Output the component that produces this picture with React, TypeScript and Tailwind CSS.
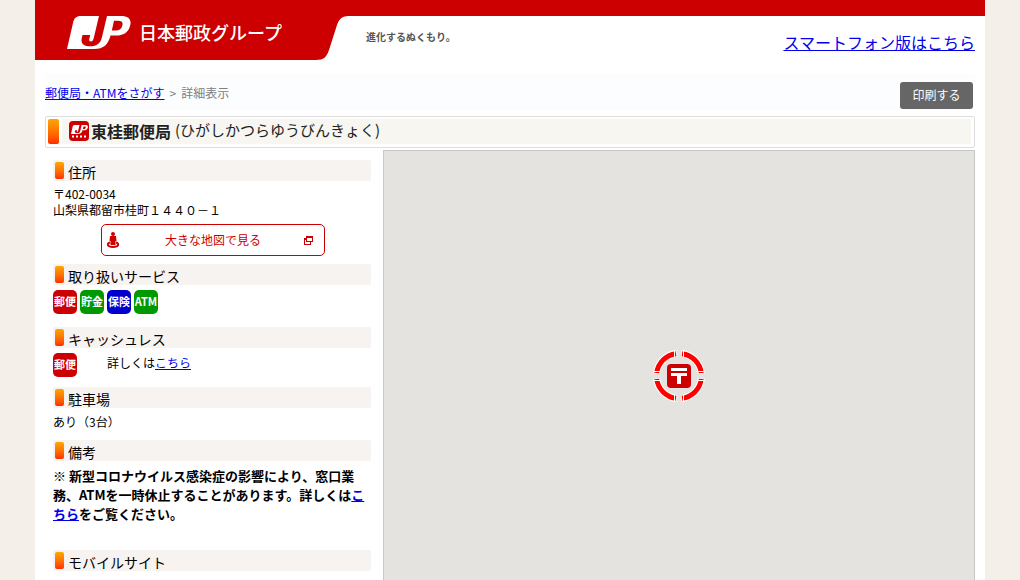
import type { ReactNode } from 'react'

const SERVICES = [
  { label: '郵便', className: 'bg-[#cc0000]' },
  { label: '貯金', className: 'bg-[#009900]' },
  { label: '保険', className: 'bg-[#0000cc]' },
  { label: 'ATM', className: 'bg-[#009900]' },
] as const

function JpMark({ className }: { className?: string }) {
  return (
    <svg viewBox="0 0 64 33" className={className} aria-hidden="true">
      <path
        fill="currentColor"
        fillRule="evenodd"
        d="M14 0H32L27 21C26.300 24 25.500 25.500 24 25.500C22 25.500 21.800 24 22.500 22L23.200 19H15.500L14.800 22C13.500 27.500 17 30.300 23 30.300C30 30.300 33.500 27.500 35 21L40 0H54C62 0 65 4 63 10C61 17 56 19.500 49 19.500H43.500C41 28.500 37 33 27 33H0L6 7C7.200 2 9 0 14 0ZM47 4.800L44.800 14.500H48C52 14.500 54.300 13.300 55.300 9.700C56.200 6.300 55 4.800 51 4.800Z"
      />
    </svg>
  )
}

function Header() {
  return (
    <header className="flex h-[60px] border-t-[16px] border-[#cc0000]">
      <div className="-mt-4 flex h-[60px] shrink-0">
        <a href="#top" className="flex w-[280px] items-center gap-2 bg-[#cc0000] pl-8 text-white">
          <JpMark className="mt-1 h-[33px] w-16" />
          <span className="mt-1 text-lg font-medium">日本郵政グループ</span>
        </a>
        <svg width="36" height="60" viewBox="0 0 36 60" aria-hidden="true">
          <path fill="#cc0000" d="M0 0H36V16C28 16 25 17 22 25L14 50C11.500 57 9 60 1 60H0Z" />
        </svg>
      </div>
      <p className="ml-[15px] flex-1 pt-3 text-[10px] leading-[18px] font-bold text-[#555]">進化するぬくもり。</p>
      <a href="#smartphone" className="mt-[14px] mr-[10px] text-base leading-6 text-[#0000ee] underline">
        スマートフォン版はこちら
      </a>
    </header>
  )
}

function SectionTitle({ children }: { children: ReactNode }) {
  return (
    <h2 className="flex h-[21px] items-center gap-1 rounded-xs bg-[#f7f3f0] pl-[2px] text-sm">
      <span className="h-[17px] w-[9px] rounded-xs bg-linear-to-b from-[#ffa500] to-[#ff2a00]" />
      <span className="pt-1 leading-[21px]">{children}</span>
    </h2>
  )
}

function Badge({ label, className }: { label: string; className: string }) {
  return (
    <span
      className={`flex h-6 w-6 items-center justify-center rounded-[5px] pb-[2px] text-[11px] leading-none font-bold whitespace-nowrap text-white ${className}`}
    >
      {label}
    </span>
  )
}

function PostMarker() {
  return (
    <svg width="52" height="52" viewBox="0 0 52 52" role="img" aria-label="郵便局">
      <g fill="none">
        <path
          stroke="#fff"
          strokeWidth="7"
          d="M23.500 3.600A22.500 22.500 0 0 0 3.600 23.500M28.500 3.600A22.500 22.500 0 0 1 48.400 23.500M3.600 28.500A22.500 22.500 0 0 0 23.500 48.400M48.400 28.500A22.500 22.500 0 0 1 28.500 48.400"
        />
        <path
          stroke="#f00"
          strokeWidth="5"
          d="M23 3.700A22.500 22.500 0 0 0 3.700 23M29 3.700A22.500 22.500 0 0 1 48.300 23M3.700 29A22.500 22.500 0 0 0 23 48.300M48.300 29A22.500 22.500 0 0 1 29 48.300"
        />
        <path
          stroke="#fff"
          d="M21.500 1V7M30.500 1V7M21.500 45V51M30.500 45V51M1 21.500H7M1 30.500H7M45 21.500H51M45 30.500H51"
        />
      </g>
      <rect x="14" y="14" width="24" height="24" rx="4" fill="#cc0000" />
      <path fill="#fff" d="M18 18H34V21H18ZM18 23H34V26H28V34H24V26H18Z" />
    </svg>
  )
}

function Details() {
  return (
    <div className="w-[318px] shrink-0 pt-[10px] text-xs text-black">
      <SectionTitle>住所</SectionTitle>
      <address className="pt-[5px] leading-4 not-italic">
        〒402-0034
        <br />
        山梨県都留市桂町１４４０－１
      </address>
      <a
        href="#map"
        className="mt-[6px] ml-12 grid h-8 w-56 grid-cols-[12px_1fr_12px] items-center rounded-[5px] border border-[#cc0000] px-[5px] text-center text-[#cc0000]"
      >
        <svg width="12" height="16" viewBox="0 0 12 16" fill="currentColor" aria-hidden="true">
          <circle cx="6" cy="2" r="2" />
          <path d="M3 4H9L9.500 9H8.500V13H3.500V9H2.500Z" />
          <path fill="none" stroke="currentColor" strokeWidth="2" d="M3 10.500C-.5 11.500 0 15 6 15S12.500 11.500 9 10.500" />
        </svg>
        大きな地図で見る
        <svg width="9" height="9" viewBox="0 0 9 9" className="-ml-[3px]" fill="currentColor" aria-hidden="true">
          <path fillRule="evenodd" d="M2 0H9V6H2ZM3 2V5H8V2Z" />
          <path d="M0 2H2V4H1V8H6V6H7V9H0Z" />
        </svg>
      </a>

      <div className="mt-2">
        <SectionTitle>取り扱いサービス</SectionTitle>
        <ul className="mt-[5px] flex gap-[3px]">
          {SERVICES.map((service) => (
            <li key={service.label}>
              <Badge {...service} />
            </li>
          ))}
        </ul>
      </div>

      <div className="mt-[13px]">
        <SectionTitle>キャッシュレス</SectionTitle>
        <div className="mt-[5px] flex gap-[30px]">
          <Badge label="郵便" className="bg-[#cc0000]" />
          <p className="leading-5">
            詳しくは
            <a href="#cashless" className="text-[#0000ee] underline">
              こちら
            </a>
          </p>
        </div>
      </div>

      <div className="mt-[10px]">
        <SectionTitle>駐車場</SectionTitle>
        <p className="pt-[6px] leading-4">あり（3台）</p>
      </div>

      <div className="mt-[10px]">
        <SectionTitle>備考</SectionTitle>
        <p className="pt-[5px] text-[13px] leading-[19px] font-bold">
          <span className="font-normal">※ </span>
          新型コロナウイルス感染症の影響により、窓口業務、ATMを一時休止することがあります。詳しくは
          <a href="#notice" className="text-[#0000ee] underline">
            こちら
          </a>
          をご覧ください。
        </p>
      </div>

      <div className="mt-[27px]">
        <SectionTitle>モバイルサイト</SectionTitle>
      </div>
    </div>
  )
}

export default function App() {
  return (
    <div className="min-h-screen bg-[#f4efe8] font-['Noto_Sans_CJK_JP',sans-serif]">
      <div id="top" className="mx-auto flex min-h-screen max-w-[950px] flex-col bg-white">
        <Header />

        <div className="mx-[10px] mt-[14px] flex h-9 items-center justify-between bg-[#fbfdff] pr-[2px]">
          <nav className="flex gap-[5px] pt-[2px] text-xs text-[#808080]" aria-label="パンくず">
            <a href="#search" className="text-[#0000ee] underline">
              郵便局・ATMをさがす
            </a>
            <span>&gt;</span>
            <span>詳細表示</span>
          </nav>
          <button type="button" className="mt-[7px] h-[27px] w-[73px] rounded-[3px] bg-[#666] pb-[2px] text-xs text-white">
            印刷する
          </button>
        </div>

        <div className="mx-[10px] mt-[6px] flex h-8 gap-[3px] rounded-xs border border-[#ddd] p-[2px] pr-[3px]">
          <span className="h-[25px] w-[11px] rounded-xs bg-linear-to-b from-[#ffa500] to-[#ff2a00]" />
          <h1 className="flex h-[25px] flex-1 items-center bg-[#f7f6f0] pb-[2px] pl-[7px] text-base text-[#222]">
            <span className="mr-[2px] flex h-5 w-5 flex-col items-center rounded bg-[#cc0000] pt-1 text-white">
              <JpMark className="h-[9px] w-[17px]" />
              <svg width="16" height="3" viewBox="0 0 16 3" className="mt-[1px]" aria-hidden="true">
                <path stroke="currentColor" strokeWidth="2" strokeDasharray="2 2" d="M1 1.500H15" />
              </svg>
            </span>
            <b className="mr-1">東桂郵便局</b>
            <span className="text-[15px]">(ひがしかつらゆうびんきょく)</span>
          </h1>
        </div>

        <main className="mt-[2px] mr-[10px] ml-[18px] flex flex-1 gap-3">
          <Details />
          <section
            id="map"
            aria-label="地図"
            className="flex flex-1 items-start justify-center border border-b-0 border-[#c8c8c8] bg-[#e4e3df] pt-[199px]"
          >
            <PostMarker />
          </section>
        </main>
      </div>
    </div>
  )
}
